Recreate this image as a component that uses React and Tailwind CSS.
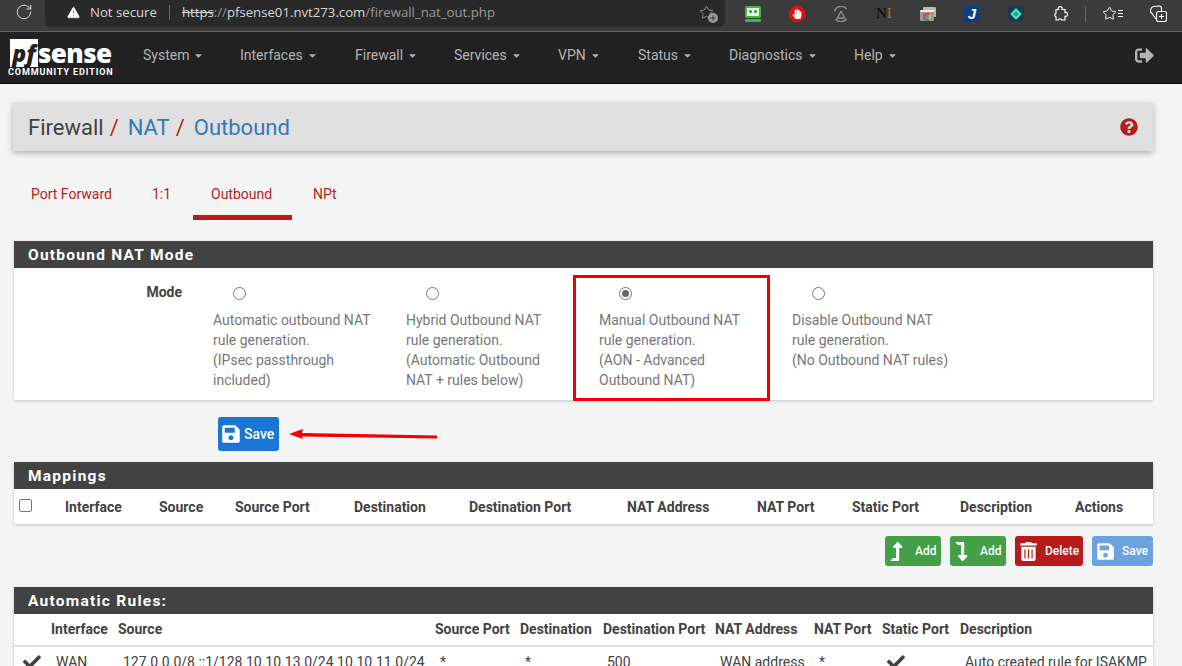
import { RotateCw, TriangleAlert, Star, Plus } from 'lucide-react'
import { FaSave, FaTrashAlt, FaLevelUpAlt, FaLevelDownAlt, FaSignOutAlt, FaCheck, FaQuestionCircle, FaCaretDown, FaHandPaper } from 'react-icons/fa'

const menus = [
  ['System', 'w-[97px]'],
  ['Interfaces', 'w-[115px]'],
  ['Firewall', 'w-[99px]'],
  ['Services', 'w-[104px]'],
  ['VPN', 'w-[80px]'],
  ['Status', 'w-[91px]'],
  ['Diagnostics', 'w-[125px]'],
  ['Help', 'w-[60px]'],
]

const modes = [
  { lines: ['Automatic outbound NAT', 'rule generation.', '(IPsec passthrough', 'included)'] },
  { lines: ['Hybrid Outbound NAT', 'rule generation.', '(Automatic Outbound', 'NAT + rules below)'] },
  { lines: ['Manual Outbound NAT', 'rule generation.', '(AON - Advanced', 'Outbound NAT)'], checked: true },
  { lines: ['Disable Outbound NAT', 'rule generation.', '(No Outbound NAT rules)'] },
]

const mappingCols = ['Interface', 'Source', 'Source Port', 'Destination', 'Destination Port', 'NAT Address', 'NAT Port', 'Static Port', 'Description', 'Actions']
const autoCols = ['Interface', 'Source', 'Source Port', 'Destination', 'Destination Port', 'NAT Address', 'NAT Port', 'Static Port', 'Description']
const autoRow = ['WAN', '127.0.0.0/8 ::1/128 10.10.13.0/24 10.10.11.0/24', '*', '*', '500', 'WAN address', '*']

function PanelHeading({ children }) {
  return (
    <div className="h-[27px] bg-[#424242] pl-[14px] text-[15.5px] leading-[28px] font-bold tracking-[1.25px] text-white">
      {children}
    </div>
  )
}

function ExtIcons() {
  return (
    <div className="flex items-center">
      {/* roboform */}
      <div className="ml-[20px] flex h-[16px] w-[16px] flex-col gap-[1px]">
        <div className="flex h-[12px] items-center justify-center rounded-[2px] bg-[#43b549] p-[2px]">
          <div className="flex h-full w-full items-center justify-center gap-[2px] bg-[#e4f4e4]">
            <span className="h-[3px] w-[3px] rounded-full bg-[#2f8f35]" />
            <span className="h-[3px] w-[3px] rounded-full bg-[#2f8f35]" />
          </div>
        </div>
        <div className="h-[3px] rounded-[1px] bg-[#43b549]" />
      </div>
      {/* adblock */}
      <div className="relative ml-[28px] flex h-[16px] w-[16px] items-center justify-center">
        <svg className="absolute inset-0" width="16" height="16" viewBox="0 0 16 16">
          <path d="M5 0h6l5 5v6l-5 5H5l-5-5V5Z" fill="#e31010" />
        </svg>
        <FaHandPaper size={10} className="relative text-white" />
      </div>
      <svg className="ml-[28px]" width="16" height="16" viewBox="0 0 16 16" fill="none" stroke="#8f8f8f" strokeWidth="1.4">
        <path d="M1.5 5.5a6.8 6.8 0 0 1 12-2.5M2.5 13a7 7 0 0 0 11 0M8 5l-3.5 7h7L8 5" />
      </svg>
      <div className="ml-[27px] flex h-[16px] w-[17px] items-center text-[15px] font-bold text-[#111] [font-family:'Liberation_Serif',serif]">
        N<span className="font-normal text-[#c26a2b]">I</span>
      </div>
      {/* chrome windows */}
      <div className="relative ml-[27px] h-[14px] w-[16px]">
        <div className="absolute top-0 right-0 h-[10px] w-[13px] rounded-[1px] bg-[#bbb]" />
        <div className="absolute bottom-0 left-0 flex h-[11px] w-[14px] items-end justify-center rounded-[1px] border-t-2 border-[#eee] bg-[#999]">
          <div className="h-[8px] w-[8px] rounded-full border-2 border-[#d8483b] border-r-[#e8b93a] border-b-[#3a9a4f] bg-[#5a8fe0]" />
        </div>
      </div>
      {/* j */}
      <div className="ml-[28px] flex h-[16px] w-[16px] items-center justify-center rounded-[1px] bg-[#0b4183] text-[15px] leading-none font-black text-white italic [font-family:'Liberation_Sans',sans-serif]">
        J
      </div>
      <div className="ml-[28px] flex h-[16px] w-[16px] items-center justify-center rounded-[2px] bg-[#20384c]">
        <div className="h-[8px] w-[8px] rotate-45 border-2 border-[#3fe8c4] bg-[#20a890]" />
      </div>
      <svg className="ml-[28px]" width="16" height="16" viewBox="0 0 16 16" fill="none" stroke="#fff" strokeWidth="1.2">
        <path d="M4 3.5h2.5a2 2 0 1 1 3.5 0h3v3a2 2 0 1 1 0 3.8V14H9.7a1.8 1.8 0 0 0-3.4 0H4v-3.3a1.9 1.9 0 0 1 0-3.6Z" />
      </svg>
      <div className="ml-[17px] h-[16px] w-px bg-[#6a6a6a]" />
      <Star size={15} strokeWidth={1.5} className="ml-[16px] text-white" />
      <div className="ml-[1px] flex flex-col gap-[2px]">
        <span className="h-px w-[5px] bg-white" />
        <span className="h-px w-[5px] bg-white" />
        <span className="h-px w-[5px] bg-white" />
      </div>
      {/* collections */}
      <svg className="ml-[27px]" width="17" height="17" viewBox="0 0 17 17" fill="none" stroke="#fff" strokeWidth="1.1">
        <path d="M6 14 1.5 8A3 3 0 0 1 1 4 3 3 0 0 1 3.5 1.5L9 1a2.5 2.5 0 0 1 2.5 2.5V6" />
        <rect x="6.5" y="6.5" width="10" height="10" rx="2" />
        <path d="M11.5 9v5M9 11.5h5" />
      </svg>
    </div>
  )
}

function BrowserBar() {
  return (
    <div className="flex h-[32px] items-start border-b border-[#666] bg-[#3b3b3b]">
      <div className="flex h-[31px] w-[45px] items-center justify-center pb-[7px] pl-[3px]">
        <RotateCw size={18} strokeWidth={1.3} className="text-[#ddd]" />
      </div>
      <div className="flex h-[27px] w-[680px] items-center rounded-br-[6px] rounded-bl-[6px] bg-[#292929] pb-[2px] pl-[21px] text-[13.2px] [font-family:'Open_Sans',sans-serif]">
        <TriangleAlert size={15} fill="#fff" strokeWidth={1} className="text-[#292929]" />
        <span className="ml-[9px] text-[#d8d8d8]">Not secure</span>
        <span className="ml-[12px] h-[15px] w-px bg-[#666]" />
        <span className="ml-[12px] text-[#d8d8d8] line-through">https</span>
        <span className="text-[#999]">://</span>
        <span className="text-[#d8d8d8]">pfsense01.nvt273.com</span>
        <span className="text-[#999]">/firewall_nat_out.php</span>
        <div className="relative mr-[11px] ml-auto text-[#9a9a9a]">
          <Star size={15} strokeWidth={1.4} />
          <div className="absolute right-[-4px] bottom-[-3px] flex h-[10px] w-[10px] items-center justify-center rounded-full bg-[#9a9a9a]">
            <Plus size={8} strokeWidth={2.5} className="text-[#292929]" />
          </div>
        </div>
      </div>
      <div className="flex h-[27px] items-center">
        <ExtIcons />
      </div>
    </div>
  )
}

function NavBar() {
  return (
    <div className="flex h-[52px] items-center border-b border-black bg-[#212121] pr-[28px]">
      <div className="w-[143px] pb-[4px] pl-[10px]">
        <div className="flex h-[33px] items-center pt-[5px]">
          <div className="flex h-[28px] w-[28px] items-center justify-center bg-white text-[23px] leading-none font-extrabold text-[#212121] italic [font-family:'Open_Sans',sans-serif]">
            pf
          </div>
          <span className="text-[26px] leading-[24px] font-extrabold tracking-[-0.6px] text-white [font-family:'Open_Sans',sans-serif]">
            sense
          </span>
        </div>
        <div className="-ml-[2px] text-[9px] leading-[10px] font-bold tracking-[0.9px] whitespace-nowrap text-white">COMMUNITY EDITION</div>
      </div>
      {menus.map(([label, width]) => (
        <div key={label} className={`${width} flex items-center gap-[4px] pb-[4px] text-[14px] text-[#b3b3b3]`}>
          {label}
          <FaCaretDown size={11} />
        </div>
      ))}
      <div className="ml-auto pb-[4px]">
        <FaSignOutAlt size={19} className="text-[#b3b3b3]" />
      </div>
    </div>
  )
}

function Tabs() {
  return (
    <div className="mt-[20px] flex h-[49px] text-[14px] text-[#b71c1c]">
      {[
        ['Port Forward', 'w-[118px] pl-[17px]'],
        ['1:1', 'w-[61px] pl-[20px]'],
        ['Outbound', 'w-[99px] pl-[18px] border-b-[5px] border-[#b71c1c]'],
        ['NPt', 'pl-[21px]'],
      ].map(([label, cls]) => (
        <div key={label} className={`${cls} pt-[13px]`}>
          {label}
        </div>
      ))}
    </div>
  )
}

function ModePanel() {
  return (
    <div className="mt-[21px] shadow-[0_1px_3px_rgba(0,0,0,0.2)]">
      <PanelHeading>Outbound NAT Mode</PanelHeading>
      <div className="flex h-[132px] bg-white text-[14px] leading-[20px] text-[#777]">
        <div className="w-[168px] pt-[14px] text-right font-bold text-[#424242]">Mode</div>
        <div className="flex pl-[31px]">
          {modes.map((m) => (
            <div key={m.lines[0]} className="w-[193px] pt-[19px]">
              <div className="ml-[20px] h-[13px] w-[13px] rounded-full border border-[#767676] bg-white p-[2px]">
                {m.checked && <div className="h-full w-full rounded-full bg-[#666]" />}
              </div>
              <div className="mt-[10px]">
                {m.lines.map((l) => (
                  <div key={l}>{l}</div>
                ))}
              </div>
            </div>
          ))}
        </div>
      </div>
    </div>
  )
}

function Callouts() {
  return (
    <>
      <div className="absolute top-[275px] left-[573px] h-[126px] w-[197px] border-[3px] border-[#f00000]" />
      <svg className="absolute top-[425px] left-[285px]" width="156" height="20" viewBox="0 0 156 20">
        <path d="M4 9 18 4 17 8 152 10.5V13.5L17 11.5 18 14Z" fill="#f00000" />
      </svg>
    </>
  )
}

function Btn({ color, icon, label, width, pad, gap }) {
  return (
    <div className={`${color} ${width} ${pad} flex h-[30px] items-center rounded-[3px] text-[12px] font-medium text-white`}>
      {icon}
      <span className={gap}>{label}</span>
    </div>
  )
}

export default function App() {
  return (
    <div className="relative h-[666px] w-[1182px] overflow-hidden bg-[#f4f4f4] text-[#212121] [font-family:Roboto,sans-serif]">
      <BrowserBar />
      <NavBar />

      <div className="px-[14px] pt-[19px] pr-[29px]">
        <div className="-ml-px flex h-[48px] items-center justify-between bg-[#e0e0e0] pr-[15px] pl-[15px] text-[22px] shadow-[0_2px_6px_rgba(0,0,0,0.3)]">
          <div>
            <span className="text-[#424242]">Firewall</span>
            <span className="ml-[6px] text-[#b71c1c]">/</span>
            <span className="ml-[9px] text-[#337ab7]">NAT</span>
            <span className="ml-[6px] text-[#b71c1c]">/</span>
            <span className="ml-[9px] text-[#337ab7]">Outbound</span>
          </div>
          <FaQuestionCircle size={18} className="text-[#b71c1c]" />
        </div>

        <Tabs />
        <ModePanel />

        <div className="mt-[17px] ml-[204px] flex h-[34px] w-[61px] items-center gap-[3px] rounded-[3px] bg-[#1976d2] pl-[3px] text-[14px] font-medium text-white">
          <FaSave size={20} />
          Save
        </div>

        <div className="mt-[11px] shadow-[0_1px_3px_rgba(0,0,0,0.2)]">
          <PanelHeading>Mappings</PanelHeading>
          <div className="grid h-[35px] grid-cols-[51px_94px_76px_119px_115px_158px_130px_95px_108px_115px_1fr] items-center bg-white text-[14px] font-bold text-[#424242]">
            <div className="mb-[2px] ml-[5px] h-[13px] w-[13px] rounded-[2px] border border-[#767676]" />
            {mappingCols.map((c) => (
              <div key={c} className="pt-[2px]">{c}</div>
            ))}
          </div>
        </div>

        <div className="mt-[12px] flex justify-end gap-[9px]">
          <Btn color="bg-[#43a047]" width="w-[56px]" pad="pl-[2px]" gap="ml-[9px]" label="Add" icon={<FaLevelUpAlt size={19} />} />
          <Btn color="bg-[#43a047]" width="w-[56px]" pad="pl-[2px]" gap="ml-[9px]" label="Add" icon={<FaLevelDownAlt size={19} />} />
          <Btn color="bg-[#b71c1c]" width="w-[68px]" pad="pl-[4px]" gap="ml-[7px]" label="Delete" icon={<FaTrashAlt size={19} />} />
          <Btn color="bg-[#6aa3df]" width="w-[61px]" pad="pl-[4px]" gap="ml-[7px]" label="Save" icon={<FaSave size={19} />} />
        </div>

        <div className="mt-[21px] shadow-[0_1px_3px_rgba(0,0,0,0.2)]">
          <PanelHeading>Automatic Rules:</PanelHeading>
          <div className="grid h-[33px] grid-cols-[37px_67px_317px_85px_83px_112px_99px_68px_78px_1fr] items-center border-b-2 border-[#ddd] bg-white text-[14px] font-bold text-[#424242]">
            <div />
            {autoCols.map((c) => (
              <div key={c} className="whitespace-nowrap">{c}</div>
            ))}
          </div>
          <div className="grid h-[40px] grid-cols-[42px_67px_317px_85px_82px_113px_99px_68px_78px_1fr] items-start bg-white pt-[5px] text-[14px] text-[#424242]">
            <FaCheck size={18} className="mt-[1px] ml-[9px]" />
            {autoRow.map((c) => (
              <div key={c + c.length} className="whitespace-nowrap">{c}</div>
            ))}
            <FaCheck size={18} className="mt-[1px]" />
            <div className="whitespace-nowrap">Auto created rule for ISAKMP</div>
          </div>
        </div>
      </div>

      <Callouts />
    </div>
  )
}
